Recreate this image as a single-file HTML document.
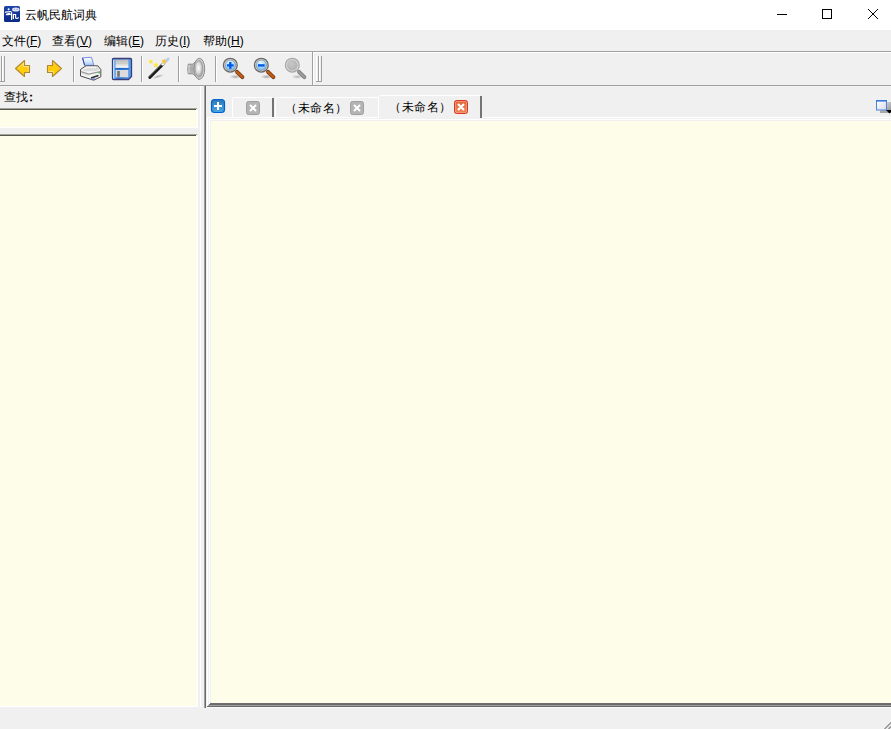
<!DOCTYPE html>
<html><head><meta charset="utf-8">
<style>
*{margin:0;padding:0;box-sizing:border-box}
html,body{width:891px;height:729px;overflow:hidden;background:#f0f0f0;font-family:"Liberation Sans",sans-serif;font-size:12px;color:#000}
.a{position:absolute}
.t{position:absolute;white-space:nowrap;line-height:14px}
.u{background:linear-gradient(#000,#000) no-repeat 0 var(--uy,12px)/100% 1px}
.vl{position:absolute;width:1px}
.hl{position:absolute;height:1px}
svg{position:absolute;overflow:visible}
</style></head><body>
<!-- title bar -->
<div class="a" style="left:0;top:0;width:891px;height:30px;background:#fff"></div>
<svg style="left:4px;top:6px" width="16" height="16" viewBox="0 0 16 16">
<defs><linearGradient id="gIcon" x1="0" y1="0" x2="0" y2="1"><stop offset="0" stop-color="#1c44a8"/><stop offset="1" stop-color="#0a2886"/></linearGradient></defs>
<rect x="0" y="0" width="16" height="16" rx="1.6" fill="url(#gIcon)"/>
<ellipse cx="11.8" cy="3.4" rx="3.8" ry="2" fill="#dde4f4"/>
<path d="M9.8 3.3h1.3M12.4 3.3h1.5" stroke="#7088c8" stroke-width=".8"/>
<circle cx="4.6" cy="3.2" r="1" fill="#fff"/>
<path d="M1.4 6.2L7 5.5M2.4 8.4L5.8 7.2M2.6 8.6L6.4 8.4M7.6 6.6V13.4M9.4 8.4V12.6M9.4 8.5H11.6V11.8M11.6 12Q12.4 13 14.4 11.8" stroke="#fff" stroke-width="1.2" fill="none" stroke-linecap="round"/>
</svg>
<div class="t" style="left:25px;top:8px">云帆民航词典</div>
<div class="hl" style="left:777px;top:14px;width:10px;background:#000"></div>
<div class="a" style="left:822px;top:9px;width:10px;height:10px;border:1px solid #000"></div>
<svg style="left:868px;top:9px" width="10" height="10" viewBox="0 0 10 10"><path d="M0 0L10 10M10 0L0 10" stroke="#000" stroke-width="1"/></svg>

<!-- menu -->
<div class="t" style="left:2px;top:34px">文件(<span class="u">F</span>)</div>
<div class="t" style="left:52px;top:34px">查看(<span class="u">V</span>)</div>
<div class="t" style="left:104px;top:34px">编辑(<span class="u">E</span>)</div>
<div class="t" style="left:155px;top:34px">历史(<span class="u">I</span>)</div>
<div class="t" style="left:203px;top:34px">帮助(<span class="u">H</span>)</div>
<div class="hl" style="left:0;top:51px;width:891px;background:#a0a0a0"></div>
<div class="hl" style="left:0;top:52px;width:891px;background:#fff"></div>

<!-- toolbar grips / separators -->
<div class="vl" style="left:1px;top:56px;height:26px;background:#a0a0a0"></div>
<div class="vl" style="left:2px;top:56px;height:25px;background:#fff"></div>
<div class="vl" style="left:4px;top:56px;height:26px;background:#a0a0a0"></div>
<div class="hl" style="left:0px;top:81px;width:5px;background:#a0a0a0"></div>
<div class="vl" style="left:73px;top:56px;height:26px;background:#a0a0a0"></div>
<div class="vl" style="left:74px;top:56px;height:26px;background:#fff"></div>
<div class="vl" style="left:141px;top:56px;height:26px;background:#a0a0a0"></div>
<div class="vl" style="left:142px;top:56px;height:26px;background:#fff"></div>
<div class="vl" style="left:178px;top:56px;height:26px;background:#a0a0a0"></div>
<div class="vl" style="left:179px;top:56px;height:26px;background:#fff"></div>
<div class="vl" style="left:215px;top:56px;height:26px;background:#a0a0a0"></div>
<div class="vl" style="left:216px;top:56px;height:26px;background:#fff"></div>
<div class="vl" style="left:312px;top:52px;height:33px;background:#a0a0a0"></div>
<div class="vl" style="left:313px;top:53px;height:32px;background:#fff"></div>
<div class="vl" style="left:316px;top:56px;height:25px;background:#fff"></div>
<div class="vl" style="left:318px;top:56px;height:26px;background:#a0a0a0"></div>
<div class="vl" style="left:319px;top:56px;height:25px;background:#fff"></div>
<div class="vl" style="left:321px;top:56px;height:26px;background:#a0a0a0"></div>
<div class="hl" style="left:316px;top:81px;width:6px;background:#a0a0a0"></div>
<div class="hl" style="left:0;top:85px;width:891px;background:#a0a0a0"></div>
<div class="hl" style="left:0;top:86px;width:891px;background:#f4f4f4"></div>

<!-- ICONS -->
<svg width="891" height="90" style="left:0;top:0">
<defs>
<radialGradient id="gArr" cx=".45" cy=".6" r=".6"><stop offset="0" stop-color="#ffd000"/><stop offset=".6" stop-color="#ffc814"/><stop offset="1" stop-color="#ffe88a"/></radialGradient>
<linearGradient id="gPaper" x1="0" y1="0" x2="0" y2="1"><stop offset="0" stop-color="#ffffff"/><stop offset=".5" stop-color="#d8ecff"/><stop offset="1" stop-color="#9ccaff"/></linearGradient>
<linearGradient id="gFlop" x1="0" y1="0" x2="1" y2="0"><stop offset="0" stop-color="#90c8ff"/><stop offset=".3" stop-color="#2f7ad8"/><stop offset="1" stop-color="#5aa4f0"/></linearGradient>
<linearGradient id="gLabel" x1="0" y1="0" x2="0" y2="1"><stop offset="0" stop-color="#b8b8b8"/><stop offset=".75" stop-color="#e8e8e8"/><stop offset="1" stop-color="#ffffff"/></linearGradient>
<radialGradient id="gLens" cx=".45" cy=".3" r=".75"><stop offset="0" stop-color="#f0faff"/><stop offset=".5" stop-color="#a8dcff"/><stop offset="1" stop-color="#60b0f0"/></radialGradient>
<radialGradient id="gLensG" cx=".4" cy=".35" r=".7"><stop offset="0" stop-color="#c8c8c8"/><stop offset="1" stop-color="#b0b0b0"/></radialGradient>
<radialGradient id="gSpk" cx=".45" cy=".45" r=".6"><stop offset="0" stop-color="#ffffff"/><stop offset=".6" stop-color="#d8d8d8"/><stop offset="1" stop-color="#a0a0a0"/></radialGradient>
<linearGradient id="gSpkB" x1="0" y1="0" x2="0" y2="1"><stop offset="0" stop-color="#d0d0d0"/><stop offset=".5" stop-color="#a8a8a8"/><stop offset="1" stop-color="#c8c8c8"/></linearGradient>
<radialGradient id="gShadow" cx=".5" cy=".5" r=".5"><stop offset="0" stop-color="#000" stop-opacity=".3"/><stop offset="1" stop-color="#000" stop-opacity="0"/></radialGradient>
<linearGradient id="gStar" x1="0" y1="0" x2="0" y2="1"><stop offset="0" stop-color="#fff8a0"/><stop offset="1" stop-color="#ffd800"/></linearGradient>
</defs>
<!-- back arrow -->
<path d="M15.5 68.5L24.5 60.5V65.5H29.5V72.5H24.5V76.5Z" fill="url(#gArr)" stroke="#b08830" stroke-width="1.1" stroke-linejoin="round"/>
<path d="M18 68.5L23.5 63.5V66.5H28.5" fill="none" stroke="#fff4b0" stroke-width=".8" opacity=".8"/>
<!-- forward arrow -->
<path d="M61.5 68.5L52.5 60.5V65.5H47.5V72.5H52.5V76.5Z" fill="url(#gArr)" stroke="#b08830" stroke-width="1.1" stroke-linejoin="round"/>
<path d="M48.5 71.5H53.5V74" fill="none" stroke="#fff4b0" stroke-width=".8" opacity=".8"/>
<!-- printer -->
<path d="M82.5 57.8L91.5 57.3L93.8 65.3H84.6Z" fill="url(#gPaper)" stroke="#8090e0" stroke-width="1"/>
<path d="M82.6 58L84.6 65.3" stroke="#3040a0" stroke-width="1"/>
<path d="M80.5 69.5L86 65.8H97.8L100.8 69.5V76.8L93.7 80.2L80.5 76Z" fill="#f6f6f6" stroke="#4a4a4a" stroke-width="1" stroke-linejoin="round"/>
<path d="M82 69.2L86.5 66.8H97L99.5 69.4L96 71.2H84Z" fill="#dcdcdc"/>
<path d="M83 69.3L87 67.4H96" fill="none" stroke="#fff" stroke-width=".9"/>
<path d="M80.8 71.6L88.7 74.2L100.4 71.6" fill="none" stroke="#9a9a9a" stroke-width="1.3"/>
<path d="M81 72.8L88.7 75.4" fill="none" stroke="#d0d0d0" stroke-width=".8"/>
<path d="M91 78L98.5 75.6" stroke="#2e2e2e" stroke-width="1.6"/>
<path d="M91.4 79.6L94.8 78.6" stroke="#6a70d8" stroke-width="1.1"/>
<rect x="98.2" y="71.8" width="1.8" height="1.6" fill="#48c848"/>
<!-- floppy -->
<path d="M113.5 58.5H130.5Q131.5 58.5 131.5 59.5V76.5L128.5 79.5H113.5Q112.5 79.5 112.5 78.5V59.5Q112.5 58.5 113.5 58.5Z" fill="url(#gFlop)" stroke="#3c3c78" stroke-width="1.3"/>
<rect x="115.6" y="59.6" width="12.8" height="8.2" fill="url(#gLabel)"/>
<path d="M116 61.6H127.6M116 63.6H127.6" stroke="#c4c4c4" stroke-width=".7"/>
<rect x="115.8" y="70" width="12.4" height="7.2" fill="#dcdcdc"/>
<rect x="117.2" y="71" width="2.6" height="5.8" fill="#747474"/>
<path d="M113.6 60V78.4" stroke="#b8dcff" stroke-width="1.2"/>
<path d="M115 68.8H129" stroke="#2060c0" stroke-width="1.2"/>
<!-- wand -->
<ellipse cx="158" cy="76.5" rx="6.5" ry="1.6" fill="url(#gShadow)" transform="rotate(-18 158 76.5)"/>
<path d="M149.8 77.4L163 64.2" stroke="#1a1a1a" stroke-width="2.9" stroke-linecap="round"/>
<path d="M149.2 76.4L162 63.6" stroke="#8a8a8a" stroke-width=".8" opacity=".9"/>
<path d="M163 64.2L168.2 59" stroke="#b0d0f4" stroke-width="2.6" stroke-linecap="round"/>
<circle cx="162.6" cy="64.4" r="1.2" fill="#fff"/>
<path d="M150.80 58.40L151.57 60.24L153.56 60.40L152.04 61.70L152.50 63.65L150.80 62.60L149.10 63.65L149.56 61.70L148.04 60.40L150.03 60.24Z" fill="url(#gStar)"/>
<path d="M155.90 61.60L156.75 63.64L158.94 63.81L157.27 65.24L157.78 67.39L155.90 66.24L154.02 67.39L154.53 65.24L152.86 63.81L155.05 63.64Z" fill="url(#gStar)"/>
<path d="M164.20 58.30L165.05 60.34L167.24 60.51L165.57 61.94L166.08 64.09L164.20 62.94L162.32 64.09L162.83 61.94L161.16 60.51L163.35 60.34Z" fill="#ffc040"/>
<!-- speaker -->
<path d="M188.2 64.2Q187.4 69 188.2 73.8H193Q196 77 199 79.6V58Q196 61 193 64.2Z" fill="url(#gSpkB)" stroke="#8c8c8c" stroke-width="1"/>
<path d="M189 65V73" stroke="#dedede" stroke-width="1"/>
<ellipse cx="199.4" cy="68.8" rx="5.3" ry="10.5" fill="#d2d2d2" stroke="#8c8c8c" stroke-width="1"/>
<ellipse cx="199.2" cy="68.8" rx="4.2" ry="8.8" fill="#a4a4a4"/>
<ellipse cx="198.8" cy="68.6" rx="3.4" ry="7.4" fill="url(#gSpk)"/>
<!-- zoom in -->
<ellipse cx="235.5" cy="76.8" rx="6" ry="2.2" fill="url(#gShadow)"/>
<path d="M237 71.8L242.4 77.2" stroke="#6a3008" stroke-width="3.8" stroke-linecap="round"/>
<path d="M237 71.8L242.4 77.2" stroke="#c25c16" stroke-width="2.4" stroke-linecap="round"/>
<circle cx="230.3" cy="65.2" r="6.9" fill="#d8d8d8" stroke="#6a6a6a" stroke-width="1.3"/>
<circle cx="230.3" cy="65.2" r="5.2" fill="url(#gLens)" stroke="#9a9a9a" stroke-width=".9"/>
<path d="M227 65.4H233.6M230.3 62.1V68.7" stroke="#0058e8" stroke-width="2.4"/>
<!-- zoom out -->
<ellipse cx="266.5" cy="76.8" rx="6" ry="2.2" fill="url(#gShadow)"/>
<path d="M268 71.8L273.4 77.2" stroke="#6a3008" stroke-width="3.8" stroke-linecap="round"/>
<path d="M268 71.8L273.4 77.2" stroke="#c25c16" stroke-width="2.4" stroke-linecap="round"/>
<circle cx="261.3" cy="65.2" r="6.9" fill="#d8d8d8" stroke="#6a6a6a" stroke-width="1.3"/>
<circle cx="261.3" cy="65.2" r="5.2" fill="url(#gLens)" stroke="#9a9a9a" stroke-width=".9"/>
<path d="M258 65.4H264.6" stroke="#0058e8" stroke-width="2.4"/>
<!-- zoom disabled -->
<ellipse cx="297.5" cy="76.8" rx="6" ry="2.2" fill="url(#gShadow)" opacity=".8"/>
<path d="M299 71.8L304.4 77.2" stroke="#7a7a7a" stroke-width="3.8" stroke-linecap="round"/>
<path d="M299 71.8L304.4 77.2" stroke="#9a9a9a" stroke-width="2.4" stroke-linecap="round"/>
<circle cx="292.3" cy="65.2" r="6.9" fill="#e4e4e4" stroke="#a8a8a8" stroke-width="1.3"/>
<circle cx="292.3" cy="65.2" r="5.2" fill="url(#gLensG)" stroke="#c0c0c0" stroke-width=".9"/>
</svg>

<!-- left panel -->
<div class="t" style="left:4px;top:90px">查找<span style="margin-left:-3px;font-weight:bold">：</span></div>
<div class="hl" style="left:0;top:108px;width:197px;background:#a4a49a"></div>
<div class="hl" style="left:0;top:109px;width:196px;background:#56564a"></div>
<div class="a" style="left:0;top:110px;width:198px;height:18px;background:#fefdea;border-right:1px solid #fff;border-bottom:1px solid #fff"></div>
<div class="hl" style="left:0;top:134px;width:197px;background:#a4a49a"></div>
<div class="hl" style="left:0;top:135px;width:196px;background:#56564a"></div>
<div class="a" style="left:0;top:136px;width:198px;height:571px;background:#fefdea;border-right:1px solid #fff;border-bottom:1px solid #fff"></div>

<!-- splitter -->
<div class="vl" style="left:200px;top:86px;height:621px;background:#fff"></div>
<div class="vl" style="left:204px;top:86px;height:622px;background:#a0a0a0"></div>
<div class="vl" style="left:205px;top:86px;height:622px;background:#696969"></div>

<!-- tabs -->
<svg width="891" height="40" style="left:0;top:87px">
<defs>
<linearGradient id="gPlus" x1="0" y1="0" x2="0" y2="1"><stop offset="0" stop-color="#2c78b8"/><stop offset="1" stop-color="#4aa8e4"/></linearGradient>
<linearGradient id="gRed" x1="0" y1="0" x2="0" y2="1"><stop offset="0" stop-color="#e0643a"/><stop offset="1" stop-color="#ea8a5a"/></linearGradient>
<linearGradient id="gWin" x1="0" y1="0" x2="1" y2="1"><stop offset="0" stop-color="#ffffff"/><stop offset="1" stop-color="#d8d8e8"/></linearGradient>
</defs>
<!-- plus -->
<rect x="211.5" y="12.5" width="13" height="13" rx="3" fill="url(#gPlus)" stroke="#0062d0" stroke-width="1.2"/>
<path d="M218 15V23M214 19H222" stroke="#fff" stroke-width="2"/>
<!-- tab1 -->
<path d="M232.5 30V12.5Q232.5 10.5 234.5 10.5H272" fill="none" stroke="#fff" stroke-width="1"/>
<rect x="272" y="11" width="2" height="19" fill="#747474"/>
<!-- tab2 -->
<path d="M275.5 30V12.5Q275.5 10.5 277.5 10.5H378.5V30" fill="none" stroke="#fff" stroke-width="1"/>
<!-- tab3 -->
<path d="M378.6 10Q379 8.5 381 8.5H480" fill="none" stroke="#fff" stroke-width="1"/>
<rect x="480" y="9" width="2" height="22" fill="#747474"/>
<!-- close icons -->
<g transform="translate(246 14)">
<rect x=".5" y=".5" width="13" height="13" rx="2" fill="#b4b4b4" stroke="#a0a0a0"/>
<path d="M4 4L10 10M10 4L4 10" stroke="#fff" stroke-width="2"/>
</g>
<g transform="translate(350 14)">
<rect x=".5" y=".5" width="13" height="13" rx="2" fill="#b4b4b4" stroke="#a0a0a0"/>
<path d="M4 4L10 10M10 4L4 10" stroke="#fff" stroke-width="2"/>
</g>
<g transform="translate(454 13)">
<rect x=".5" y=".5" width="13" height="13" rx="2" fill="url(#gRed)" stroke="#dc3420"/>
<rect x="1.5" y="1.5" width="11" height="11" rx="1" fill="none" stroke="#f0a080" stroke-width=".8"/>
<path d="M4 4L10 10M10 4L4 10" stroke="#fff" stroke-width="2.2"/>
</g>
<!-- window list icon -->
<defs><linearGradient id="gBack" x1="0" y1="0" x2="1" y2="1"><stop offset="0" stop-color="#f0f0f0"/><stop offset="1" stop-color="#888"/></linearGradient></defs>
<rect x="880" y="15" width="11" height="11" fill="url(#gBack)"/>
<rect x="880" y="24" width="8" height="2" fill="#a8a8a8"/>
<rect x="876.5" y="13.5" width="10" height="9.5" fill="url(#gWin)" stroke="#4684e0"/>
<rect x="876" y="13" width="11" height="1.6" fill="#3a78d8"/>
<path d="M886 23H893L889.5 26.5Z" fill="#000"/>
</svg>
<div class="t" style="left:285px;top:101px;letter-spacing:.5px">（未命名）</div>
<div class="t" style="left:389px;top:100px;letter-spacing:.5px">（未命名）</div>

<!-- content frame -->
<div class="hl" style="left:207px;top:117px;width:172px;background:#fff"></div>
<div class="hl" style="left:482px;top:117px;width:409px;background:#fff"></div>
<div class="vl" style="left:207px;top:117px;height:589px;background:#fff"></div>
<div class="hl" style="left:209px;top:119px;width:682px;background:#fff"></div>
<div class="vl" style="left:209px;top:119px;height:585px;background:#fff"></div>
<div class="a" style="left:211px;top:121px;width:680px;height:582px;background:#fefdea"></div>
<div class="hl" style="left:210px;top:703px;width:681px;background:#6e6e6e"></div>
<div class="hl" style="left:209px;top:704px;width:682px;background:#6a6a6a"></div>
<div class="hl" style="left:208px;top:705px;width:683px;background:#a0a0a0"></div>
<div class="hl" style="left:207px;top:706px;width:684px;background:#6a6a6a"></div>
<div class="hl" style="left:206px;top:707px;width:685px;background:#fafafa"></div>

<!-- resize grip -->
<svg width="16" height="16" style="left:875px;top:713px">
<path d="M15.5 8.5L8.5 15.5" stroke="#fff" stroke-width="1"/>
<path d="M16 9.5L9.5 16" stroke="#909090" stroke-width="1.4"/>
<path d="M16 13.5L13.5 16" stroke="#909090" stroke-width="1.4"/>
</svg>
</body></html>
